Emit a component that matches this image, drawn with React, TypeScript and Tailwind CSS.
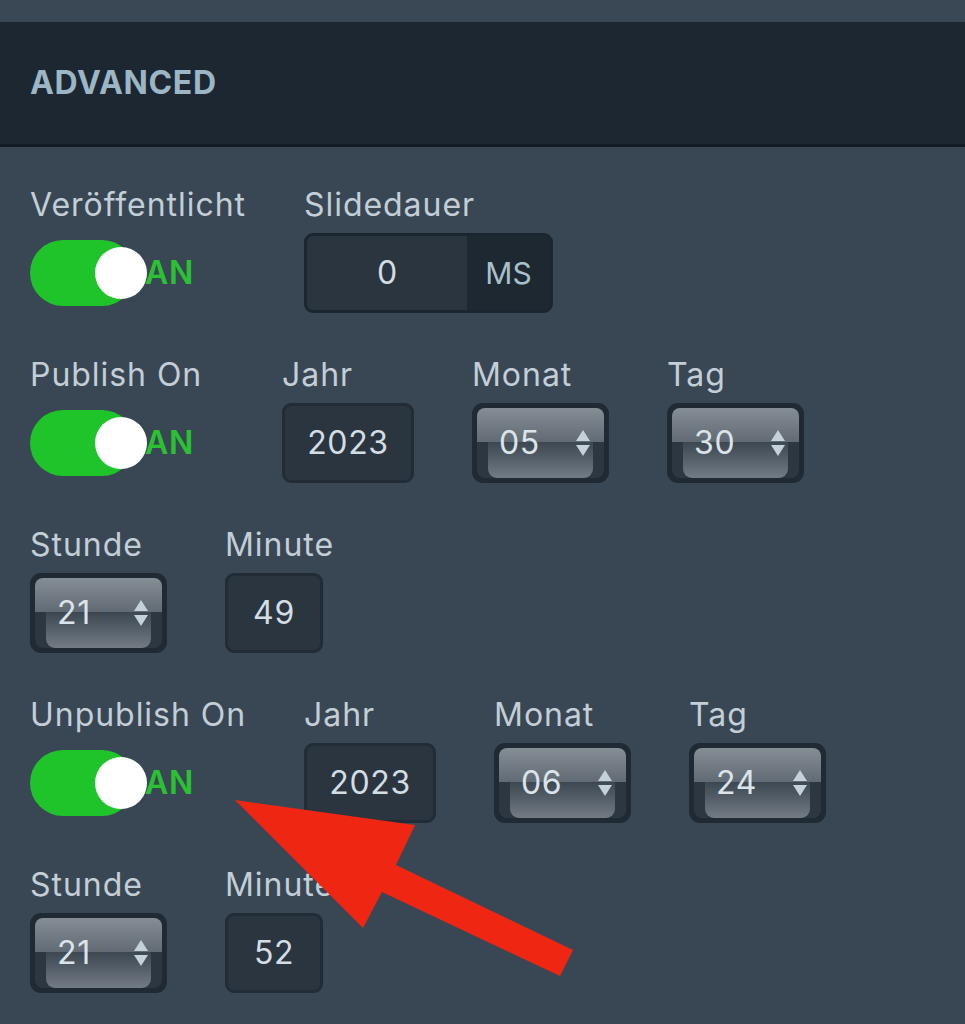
import React from "react";

const font = { fontFamily: "Inter, Roboto, 'Noto Sans', sans-serif" };

function Label({ children }: { children: React.ReactNode }) {
  return <div className="text-[32px] leading-[36px] tracking-[0.03em] text-[#c3ced7]">{children}</div>;
}

function Toggle() {
  return (
    <div className="h-20 flex items-center">
      <div className="relative w-[105px] h-[66px] rounded-full bg-[#1fc42b]">
        <div className="absolute left-[65px] top-[7px] size-[52px] rounded-full bg-white" />
      </div>
      <span className="ml-[10px] text-[32px] font-semibold tracking-[0.02em] text-[#2bc232] leading-none">AN</span>
    </div>
  );
}

function Box({ value, w }: { value: string; w: string }) {
  return (
    <div
      className={`${w} h-20 rounded-[9px] border-[3px] border-[#212c36] bg-[#2a3540] flex items-center justify-center text-[32px] tracking-[0.02em] text-[#d3dde4]`}
    >
      {value}
    </div>
  );
}

function Select({ value }: { value: string }) {
  return (
    <div className="w-[137px] h-20 rounded-[11px] bg-[#1f2a34] p-[5px]">
      <div className="relative h-full rounded-[8px] overflow-hidden flex flex-col">
        <div className="h-[34px] bg-gradient-to-b from-[#858d95] to-[#626b74]" />
        <div className="flex-1 bg-[#2d3741] px-[11px]">
          <div className="h-full rounded-b-[9px] bg-gradient-to-b from-[#3d4751] to-[#737c85]" />
        </div>
        <div className="absolute inset-0 flex items-center justify-between pl-[22px] pr-[13px]">
          <span className="text-[32px] tracking-[0.02em] text-[#dbe4ea] leading-none">{value}</span>
          <svg width="16" height="28" viewBox="0 0 16 28">
            <path d="M8 1 L15 12 L1 12 Z" fill="#c5d1d9" />
            <path d="M1 16 L15 16 L8 27 Z" fill="#c5d1d9" />
          </svg>
        </div>
      </div>
    </div>
  );
}

function Field({ label, children, className = "" }: { label: string; children: React.ReactNode; className?: string }) {
  return (
    <div className={`flex flex-col gap-[10px] ${className}`}>
      <Label>{label}</Label>
      {children}
    </div>
  );
}

function DateRow({ label, year, month, day }: { label: string; year: string; month: string; day: string }) {
  return (
    <div className="flex gap-[58px]">
      <Field label={label} className="min-w-[194px]">
        <Toggle />
      </Field>
      <Field label="Jahr">
        <Box value={year} w="w-[132px]" />
      </Field>
      <Field label="Monat">
        <Select value={month} />
      </Field>
      <Field label="Tag">
        <Select value={day} />
      </Field>
    </div>
  );
}

function TimeRow({ hour, minute }: { hour: string; minute: string }) {
  return (
    <div className="flex gap-[58px]">
      <Field label="Stunde">
        <Select value={hour} />
      </Field>
      <Field label="Minute">
        <Box value={minute} w="w-[98px]" />
      </Field>
    </div>
  );
}

export default function App() {
  return (
    <div className="relative w-[965px] h-[1024px] overflow-hidden bg-[#394755]" style={font}>
      <div className="h-[22px] bg-[#3a4856]" />
      <div className="h-[125px] bg-[#1c2731] border-b-[3px] border-[#141c23] flex items-center px-[30px]">
        <h2 className="text-[32px] font-bold tracking-[0.02em] text-[#9cb6c5]">ADVANCED</h2>
      </div>

      <div className="flex flex-col gap-[44px] pl-[30px] pt-[40px]">
        <div className="flex gap-[58px]">
          <Field label="Veröffentlicht">
            <Toggle />
          </Field>
          <Field label="Slidedauer">
            <div className="w-[249px] h-20 rounded-[9px] border-[3px] border-[#1c2630] bg-[#1e2831] flex overflow-hidden">
              <div className="w-[160px] bg-[#2a3540] flex items-center justify-center text-[32px] text-[#d3dde4]">0</div>
              <div className="flex-1 flex items-center justify-center text-[30px] text-[#a9c0cc]">MS</div>
            </div>
          </Field>
        </div>

        <DateRow label="Publish On" year="2023" month="05" day="30" />
        <TimeRow hour="21" minute="49" />
        <DateRow label="Unpublish On" year="2023" month="06" day="24" />
        <TimeRow hour="21" minute="52" />
      </div>

      <svg className="absolute inset-0 pointer-events-none" width="965" height="1024" viewBox="0 0 965 1024">
        <polygon
          points="235,800 415,825 396,865 573,950 560,976 382,892 363,928"
          fill="#ee2612"
        />
      </svg>
    </div>
  );
}
